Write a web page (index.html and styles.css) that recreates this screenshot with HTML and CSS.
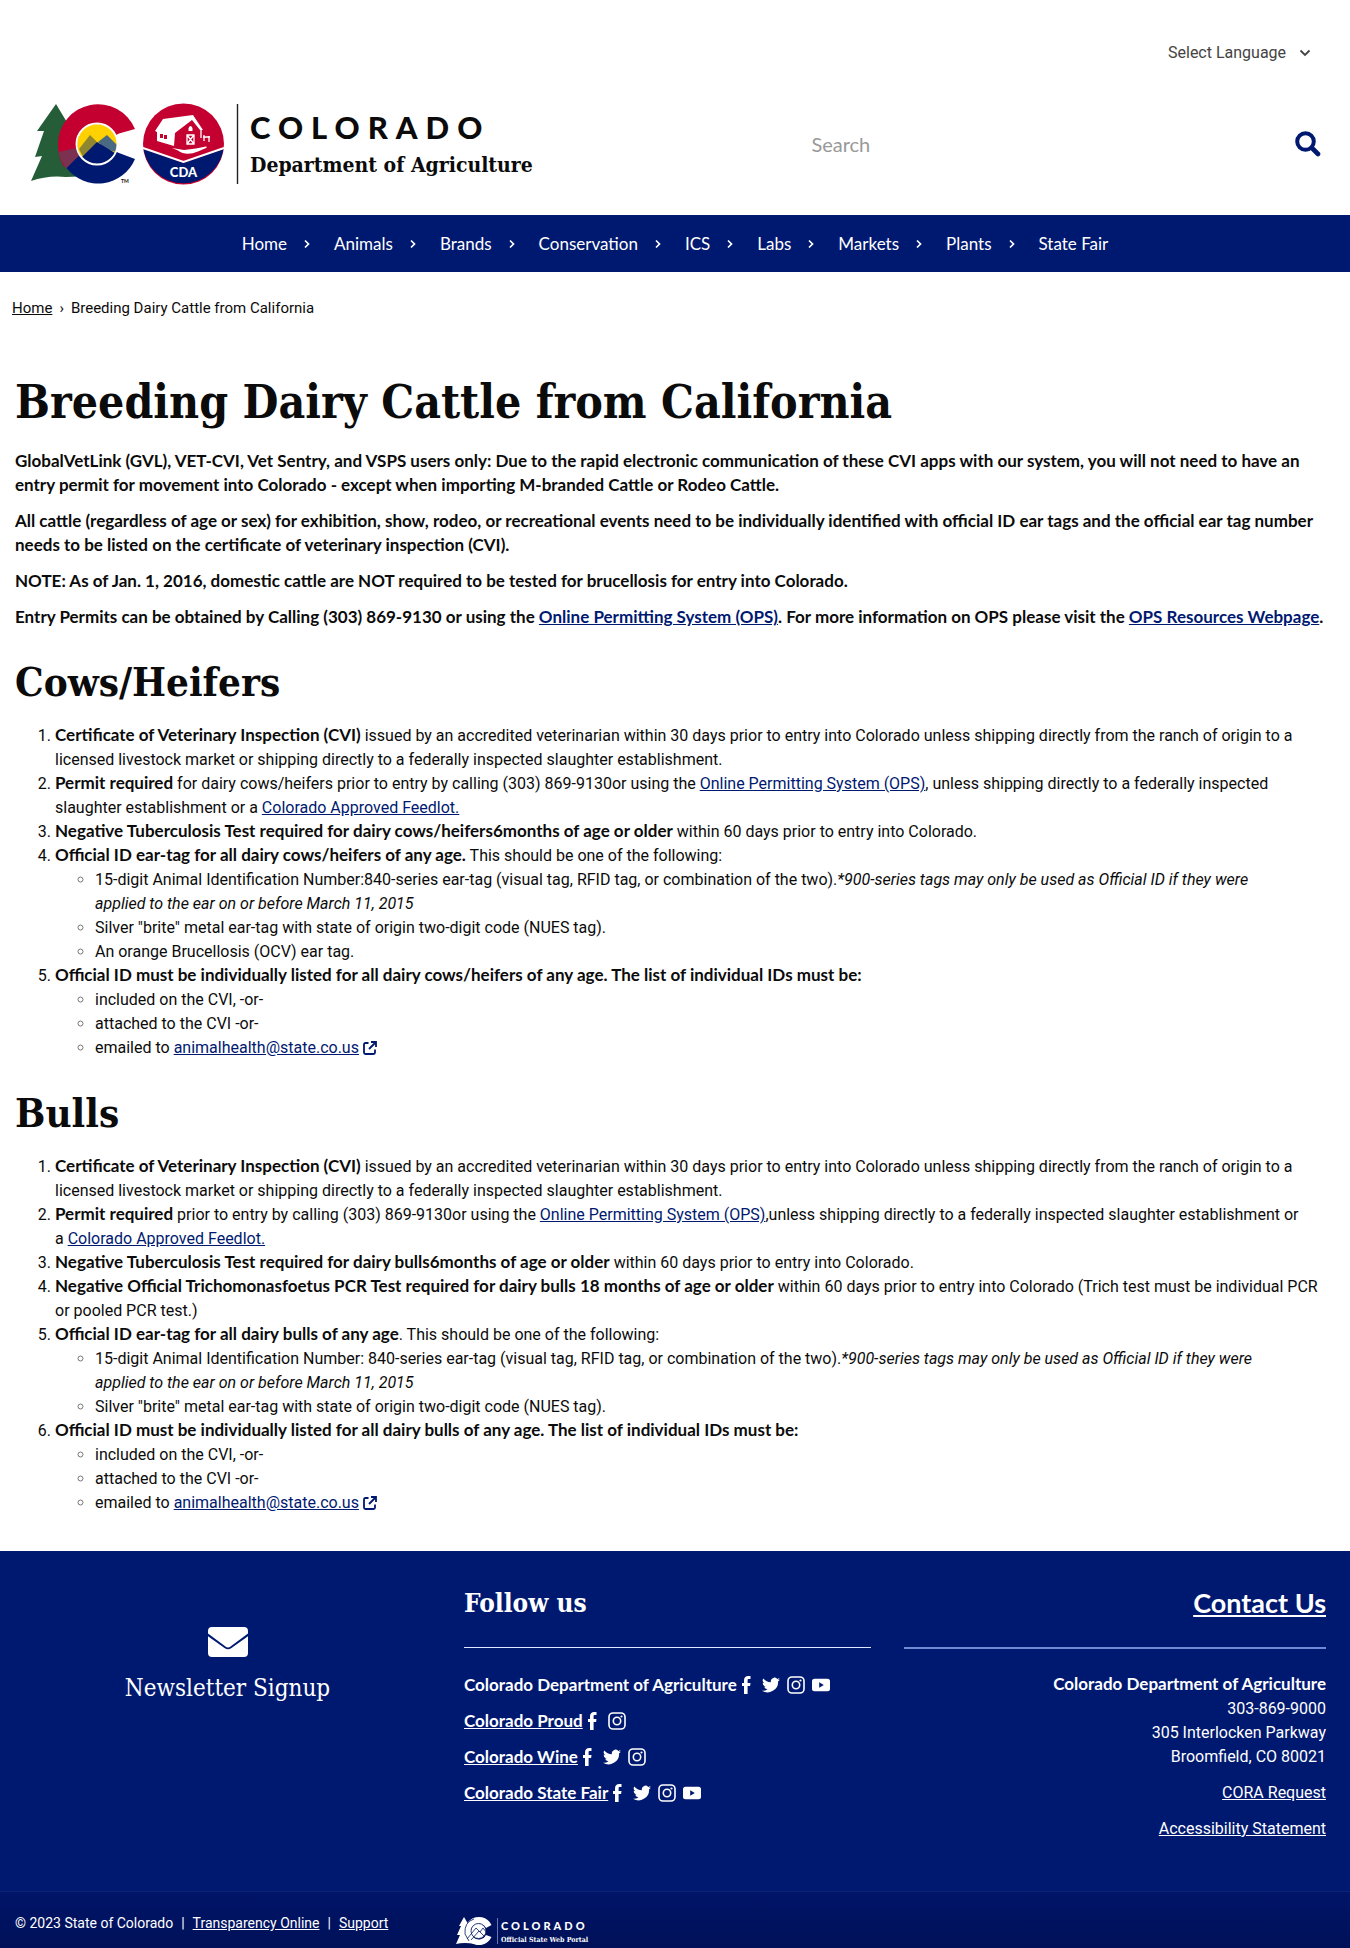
FILE: index.html
```html
<!DOCTYPE html>
<html lang="en">
<head>
<meta charset="utf-8">
<meta name="viewport" content="width=device-width, initial-scale=1">
<title>Breeding Dairy Cattle from California | Department of Agriculture</title>
<link rel="stylesheet" href="styles.css">
</head>
<body>
<svg class="sprite" aria-hidden="true">
  <symbol id="i-facebook" viewBox="0 0 18 18"><path d="M7 18V10H5V7h2V4.600C7 1.600 8.500 0 11.200 0H13.500v3h-1.600C10.800 3 10.600 3.500 10.600 4.400V7h2.900l-.4 3h-2.500v8z"/></symbol>
  <symbol id="i-twitter" viewBox="0 0 24 24"><path d="M24 4.600a10 10 0 0 1-2.800.8 5 5 0 0 0 2.200-2.700 10 10 0 0 1-3.100 1.200 4.900 4.900 0 0 0-8.400 4.500A14 14 0 0 1 1.700 3.200a4.900 4.900 0 0 0 1.500 6.500 4.900 4.900 0 0 1-2.200-.6 4.900 4.900 0 0 0 3.900 4.900 5 5 0 0 1-2.200.1 4.900 4.900 0 0 0 4.600 3.400A9.900 9.900 0 0 1 0 19.500 14 14 0 0 0 21.500 7.100 10 10 0 0 0 24 4.600z"/></symbol>
  <symbol id="i-instagram" viewBox="0 0 18 18"><rect x="1" y="1" width="16" height="16" rx="4" fill="none" stroke="currentColor" stroke-width="1.600"/><circle cx="9" cy="9" r="3.700" fill="none" stroke="currentColor" stroke-width="1.600"/><circle cx="13.500" cy="4.500" r="1.100"/></symbol>
  <symbol id="i-youtube" viewBox="0 0 18 18"><path fill-rule="evenodd" d="M2.500 2.800h13Q18 2.800 18 5.300v7.400q0 2.500-2.500 2.500h-13Q0 15.200 0 12.700V5.300Q0 2.800 2.500 2.800zM7.200 6.300v5.400L11.800 9z"/></symbol>
  <symbol id="i-external" viewBox="0 0 14 14"><path d="M5.500 2H2.500Q1 2 1 3.500v8Q1 13 2.500 13h8q1.500 0 1.500-1.500v-3M8 1h5v5M13 1 6 8" fill="none" stroke="currentColor" stroke-width="1.800"/></symbol>
  <symbol id="i-chevron" viewBox="0 0 8 10"><path d="M2 1.500 5.500 5 2 8.500" fill="none" stroke="currentColor" stroke-width="1.700"/></symbol>
</svg>

<header class="site-header">
  <div class="language">
    <select class="language-select" aria-label="Select Language"><option>Select Language</option></select>
    <svg class="language-arrow" width="12" height="8" viewBox="0 0 12 8" aria-hidden="true"><path d="M1.500 1.500 6 6l4.500-4.500" fill="none" stroke="currentColor" stroke-width="1.800"/></svg>
  </div>
  <div class="brand-row">
    <a class="brand" href="#" aria-label="Colorado Department of Agriculture home">
      <svg width="520" height="84" viewBox="28 102 520 84">
        <path fill="#245d38" d="M56 104 68 124 90 176 66 177Q48 175 31 181L42 156 35 157 44 131 37 131z"/>
        <path fill="#c3002f" d="M135 129A40 40 0 0 0 58 144q0 14 6 23L98 144 119 133.500z"/>
        <path fill="#7c3150" d="M58.500 152 Q60 161 66.500 169L80 156 76 148z"/>
        <path fill="#001970" d="M66.500 168 94 141 119 153 135 159A40 40 0 0 1 66.500 168z"/>
        <circle cx="97" cy="144" r="20" fill="#ffd100"/>
        <path fill="#8f8730" d="M79 149 90 135 96 141 102 149 84 159z"/>
        <path fill="#4a6a83" d="M98 142 107 135 117 145 116 152 106 149z"/>
        <path fill="#001970" d="M82 157 97 142 115 153A20 20 0 0 1 82 157z"/>
        <circle cx="97" cy="144" r="20.500" fill="none" stroke="#fff" stroke-width="1.800"/>
        <text x="121" y="183" class="logo-tm">TM</text>
        <circle cx="183.500" cy="144" r="40.500" fill="#c3002f"/>
        <path fill="#001970" d="M143.500 149 183.500 163 223.500 149A40.500 40.500 0 0 1 143.500 149z"/>
        <path fill="none" stroke="#fff" stroke-width="2" d="M143 148 183.500 162 224 148"/>
        <path fill="#fff" d="M163 119 193 115 203 130 200 130 192 120 175 133 174 146 157 141 157 132 155 131z"/>
        <path fill="#c3002f" d="M160 134h3v4h-3zM164 135h3v4h-3z"/>
        <path fill="none" stroke="#fff" stroke-width="1.300" d="M187 135h7v9h-7zl7 9m0-9-7 9M201 129v9m3-3v6m5-5v6m-6-5h7"/>
        <path fill="#fff" d="M188.500 128q2-4 4 0v3h-4zM172 148l12 2 12-1.500 10-2q2 0 0 1.500l-8 3.500q-12 5-20-1z"/>
        <text x="183.500" y="177" class="logo-cda">CDA</text>
        <path stroke="#222" stroke-width="1.400" d="M237.500 104v80"/>
        <text x="250" y="139" class="logo-name">COLORADO</text>
        <text x="250" y="172" class="logo-dept">Department of Agriculture</text>
      </svg>
    </a>
    <form class="search" role="search">
      <input class="search-input" type="search" placeholder="Search" aria-label="Search">
      <button class="search-button" type="button" aria-label="Search"><svg width="26" height="26" viewBox="0 0 26 26" aria-hidden="true"><circle cx="10.500" cy="10.500" r="8.300" fill="none" stroke="currentColor" stroke-width="4"/><path d="M17 17 23 23" stroke="currentColor" stroke-width="4.600" stroke-linecap="round"/></svg></button>
    </form>
  </div>
</header>

<nav class="main-nav" aria-label="Main">
  <a href="#">Home</a><svg class="chev" aria-hidden="true"><use href="#i-chevron"/></svg>
  <a href="#">Animals</a><svg class="chev" aria-hidden="true"><use href="#i-chevron"/></svg>
  <a href="#">Brands</a><svg class="chev" aria-hidden="true"><use href="#i-chevron"/></svg>
  <a href="#">Conservation</a><svg class="chev" aria-hidden="true"><use href="#i-chevron"/></svg>
  <a href="#">ICS</a><svg class="chev" aria-hidden="true"><use href="#i-chevron"/></svg>
  <a href="#">Labs</a><svg class="chev" aria-hidden="true"><use href="#i-chevron"/></svg>
  <a href="#">Markets</a><svg class="chev" aria-hidden="true"><use href="#i-chevron"/></svg>
  <a href="#">Plants</a><svg class="chev" aria-hidden="true"><use href="#i-chevron"/></svg>
  <a href="#">State Fair</a>
</nav>

<nav class="breadcrumb" aria-label="Breadcrumb"><a href="#">Home</a><span>›</span><span>Breeding Dairy Cattle from California</span></nav>

<main class="content">
  <h1>Breeding Dairy Cattle from California</h1>
  <p>GlobalVetLink (GVL), VET-CVI, Vet Sentry, and VSPS users only: Due to the rapid electronic communication of these CVI apps with our system, you will not need to have an entry permit for movement into Colorado - except when importing M-branded Cattle or Rodeo Cattle.</p>
  <p>All cattle (regardless of age or sex) for exhibition, show, rodeo, or recreational events need to be individually identified with official ID ear tags and the official ear tag number needs to be listed on the certificate of veterinary inspection (CVI).</p>
  <p>NOTE: As of Jan. 1, 2016, domestic cattle are NOT required to be tested for brucellosis for entry into Colorado.</p>
  <p>Entry Permits can be obtained by Calling (303) 869-9130 or using the <a href="#">Online Permitting System (OPS)</a>. For more information on OPS please visit the <a href="#">OPS Resources Webpage</a>.</p>

  <h2>Cows/Heifers</h2>
  <ol>
    <li><strong>Certificate of Veterinary Inspection (CVI)</strong> issued by an accredited veterinarian within 30 days prior to entry into Colorado unless shipping directly from the ranch of origin to a licensed livestock market or shipping directly to a federally inspected slaughter establishment.</li>
    <li><strong>Permit required</strong> for dairy cows/heifers prior to entry by calling (303) 869-9130or using the <a href="#">Online Permitting System (OPS)</a>, unless shipping directly to a federally inspected slaughter&nbsp;establishment or a <a href="#">Colorado Approved Feedlot.</a></li>
    <li><strong>Negative Tuberculosis Test required for dairy cows/heifers6months of age or older</strong> within 60 days prior to entry into Colorado.</li>
    <li><strong>Official ID ear-tag for all dairy cows/heifers of any age.</strong> This should be one of the following:
      <ul>
        <li>15-digit Animal Identification Number:840-series ear-tag (visual tag, RFID tag, or combination of the two).<em>*900-series tags may only be used as Official ID if they were applied&nbsp;to&nbsp;the&nbsp;ear on or before March 11, 2015</em></li>
        <li>Silver "brite" metal ear-tag with state of origin two-digit code (NUES tag).</li>
        <li>An orange Brucellosis (OCV) ear tag.</li>
      </ul>
    </li>
    <li><strong>Official ID must be individually listed for all dairy cows/heifers of any age. The list of individual IDs must be:</strong>
      <ul>
        <li>included on the CVI, -or-</li>
        <li>attached to the CVI -or-</li>
        <li>emailed to <a href="#">animalhealth@state.co.us</a> <svg class="external" aria-hidden="true"><use href="#i-external"/></svg></li>
      </ul>
    </li>
  </ol>

  <h2>Bulls</h2>
  <ol>
    <li><strong>Certificate of Veterinary Inspection (CVI)</strong> issued by an accredited veterinarian within 30 days prior to entry into Colorado unless shipping directly from the ranch of origin to a licensed livestock market or shipping directly to a federally inspected slaughter establishment.</li>
    <li><strong>Permit required</strong> prior to entry by calling (303) 869-9130or using the <a href="#">Online Permitting System (OPS)</a>,unless shipping directly to a federally inspected slaughter establishment or a&nbsp;<a href="#">Colorado Approved Feedlot.</a></li>
    <li><strong>Negative Tuberculosis Test required for dairy bulls6months of age or older</strong> within 60 days prior to entry into Colorado.</li>
    <li><strong>Negative Official Trichomonasfoetus PCR Test required for dairy bulls 18 months of age or older</strong> within 60 days prior to entry into Colorado (Trich test must be individual PCR or&nbsp;pooled PCR test.)</li>
    <li><strong>Official ID ear-tag for all dairy bulls of any age</strong>. This should be one of the following:
      <ul>
        <li>15-digit Animal Identification Number: 840-series ear-tag (visual tag, RFID tag, or combination of the two).<em>*900-series tags may only be used as Official ID if they were applied&nbsp;to&nbsp;the&nbsp;ear on or before March 11, 2015</em></li>
        <li>Silver "brite" metal ear-tag with state of origin two-digit code (NUES tag).</li>
      </ul>
    </li>
    <li><strong>Official ID must be individually listed for all dairy bulls of any age. The list of individual IDs must be:</strong>
      <ul>
        <li>included on the CVI, -or-</li>
        <li>attached to the CVI -or-</li>
        <li>emailed to <a href="#">animalhealth@state.co.us</a> <svg class="external" aria-hidden="true"><use href="#i-external"/></svg></li>
      </ul>
    </li>
  </ol>
</main>

<footer>
  <div class="footer-main">
    <a class="newsletter" href="#">
      <svg width="40" height="30" viewBox="0 0 40 30" aria-hidden="true"><path fill="currentColor" d="M4 0h32q4 0 4 4v2.500L22.500 19.500q-2.500 1.900-5 0L0 6.500V4q0-4 4-4zM0 9.200 16.500 21q3.500 2.400 7 0L40 9.200V26q0 4-4 4H4q-4 0-4-4z"/></svg>
      <span>Newsletter Signup</span>
    </a>
    <section class="follow">
      <h3>Follow us</h3>
      <hr>
      <ul class="follow-list">
        <li><span>Colorado Department of Agriculture</span><span class="social"><a href="#" aria-label="Facebook"><svg><use href="#i-facebook"/></svg></a><a href="#" aria-label="Twitter"><svg><use href="#i-twitter"/></svg></a><a href="#" aria-label="Instagram"><svg><use href="#i-instagram"/></svg></a><a href="#" aria-label="YouTube"><svg><use href="#i-youtube"/></svg></a></span></li>
        <li><a href="#">Colorado Proud</a><span class="social"><a href="#" aria-label="Facebook"><svg><use href="#i-facebook"/></svg></a><a href="#" aria-label="Instagram"><svg><use href="#i-instagram"/></svg></a></span></li>
        <li><a href="#">Colorado Wine</a><span class="social"><a href="#" aria-label="Facebook"><svg><use href="#i-facebook"/></svg></a><a href="#" aria-label="Twitter"><svg><use href="#i-twitter"/></svg></a><a href="#" aria-label="Instagram"><svg><use href="#i-instagram"/></svg></a></span></li>
        <li><a href="#">Colorado State Fair</a><span class="social"><a href="#" aria-label="Facebook"><svg><use href="#i-facebook"/></svg></a><a href="#" aria-label="Twitter"><svg><use href="#i-twitter"/></svg></a><a href="#" aria-label="Instagram"><svg><use href="#i-instagram"/></svg></a><a href="#" aria-label="YouTube"><svg><use href="#i-youtube"/></svg></a></span></li>
      </ul>
    </section>
    <section class="contact">
      <h3><a href="#">Contact Us</a></h3>
      <hr>
      <p><strong>Colorado Department of Agriculture</strong><br>303-869-9000<br>305 Interlocken Parkway<br>Broomfield, CO 80021</p>
      <p><a href="#">CORA Request</a></p>
      <p><a href="#">Accessibility Statement</a></p>
    </section>
  </div>
  <div class="footer-bottom">
    <div class="legal"><span>© 2023 State of Colorado</span><span>|</span><a href="#">Transparency Online</a><span>|</span><a href="#">Support</a></div>
    <a class="portal" href="#" aria-label="Colorado Official State Web Portal">
      <svg width="140" height="30" viewBox="454 1917 140 30">
        <path fill="#fff" d="M463 1918 470 1930 474 1945 Q463 1943 455 1945L459 1936 456 1936 460 1927 458 1927z"/>
        <path fill="#fff" d="M490.500 1926A14 14 0 1 0 490.500 1938L485 1936A8 8 0 1 1 485 1929z"/>
        <circle cx="477.500" cy="1932" r="7.500" fill="#fff"/>
        <g fill="none" stroke="#001663" stroke-width=".8"><path d="M473 1920Q463 1923 464 1935L468 1942M466 1940 475 1929 479 1933 482 1929 486 1934M470 1941 478 1932 484 1938"/><circle cx="477.500" cy="1932" r="7.500"/></g>
        <path stroke="#7f90c8" stroke-width=".8" d="M496.500 1919v26"/>
        <text x="500" y="1931" class="portal-name">COLORADO</text>
        <text x="500" y="1943" class="portal-sub">Official State Web Portal</text>
      </svg>
    </a>
  </div>
</footer>
</body>
</html>
```
FILE: styles.css
```css
* { box-sizing: border-box; }

body {
  margin: 0;
  background: #fff;
  color: #0b0b0b;
  font: 16px/24px Roboto, "Open Sans", sans-serif;
}

.sprite { position: absolute; width: 0; height: 0; }
svg { fill: currentColor; }

/* header */
.site-header { padding: 41px 28px 29px; }
.language {
  display: flex;
  align-items: center;
  justify-content: flex-end;
  gap: 12px;
  padding-right: 11px;
  color: #444;
}
.language-select {
  appearance: none;
  border: 0;
  padding: 0;
  background: none;
  color: inherit;
  font: inherit;
}
.brand-row {
  display: flex;
  align-items: center;
  margin-top: 37px;
}
.brand { flex: 0 0 60%; color: #0b0b0b; }
.brand svg { display: block; }
.logo-name { font: 900 31px Lato, sans-serif; letter-spacing: 8px; }
.logo-dept { font: bold 21px "DejaVu Serif Condensed", "DejaVu Serif", serif; }
.logo-cda { font: 900 13px Lato, sans-serif; fill: #fff; text-anchor: middle; }
.logo-tm { font: bold 5px Lato, sans-serif; }
.search { display: flex; flex: 1; align-items: center; padding-right: 1px; }
.search-input {
  flex: 1;
  min-width: 0;
  border: 0;
  outline: 0;
  padding: 8px 7px;
  background: none;
  font: 20px/24px Lato, "Open Sans", sans-serif;
}
.search-input::placeholder { color: #999; }
.search-button { border: 0; padding: 0; background: none; color: #001970; }
.search-button svg { display: block; fill: none; }

/* navigation */
.main-nav {
  display: flex;
  flex-wrap: wrap;
  align-items: center;
  justify-content: center;
  min-height: 57px;
  background: #001970;
  color: #fff;
  font-family: Lato, "Open Sans", sans-serif;
  font-size: 17px;
}
.main-nav a { color: inherit; text-decoration: none; }
.chev { width: 8px; height: 10px; margin: 0 23px 0 16px; }

.breadcrumb {
  display: flex;
  gap: 7px;
  padding: 24px 12px;
  font-size: 15px;
}
.breadcrumb a { color: inherit; }

/* article */
.content { padding: 29px 15px 36px; }
h1, h2, h3 { margin: 0; font-family: "DejaVu Serif Condensed", "DejaVu Serif", serif; font-weight: bold; }
h1 { margin-bottom: 18px; font-size: 46px; line-height: 58px; }
h2 { margin: 29px 0 18px; font-size: 40px; line-height: 48px; }
strong { font: bold 17px/20px Lato, "Open Sans", sans-serif; }
.content p { margin: 0 0 12px; font: bold 17px/24px Lato, "Open Sans", sans-serif; }
.content a, .external { color: #001970; }
ol, ul { margin: 0; padding-left: 40px; }
ul { list-style: circle; }
ul li::marker { color: #777; }
.external { width: 14px; height: 14px; vertical-align: -2px; }

/* footer */
footer { background: #001970; color: #fff; }
footer a { color: inherit; }
.footer-main {
  display: grid;
  grid-template-columns: 407fr 407fr 422fr;
  gap: 33px;
  padding: 36px 24px 38px;
}
.newsletter {
  display: flex;
  flex-direction: column;
  align-items: center;
  gap: 16px;
  padding-top: 40px;
  font: 24px/30px "DejaVu Serif Condensed", "DejaVu Serif", serif;
  text-decoration: none;
}
h3 { font-size: 26px; line-height: 32px; }
hr { height: 1px; margin: 28px 0 25px; border: 0; background: #dfe6ff; }
.follow-list { padding: 0; list-style: none; font: bold 17px/24px Lato, "Open Sans", sans-serif; }
.follow-list li { display: flex; align-items: center; margin-bottom: 12px; }
.social { display: flex; gap: 7px; }
.social svg { display: block; width: 18px; height: 18px; }
.contact { text-align: right; }
.contact h3 { font: bold 27px/32px Lato, "Open Sans", sans-serif; }
.contact hr { height: 2px; margin-bottom: 24px; background: #6f8bd6; }
.contact p { margin: 0 0 12px; }
.footer-bottom {
  display: grid;
  grid-template-columns: 1fr 2fr;
  align-items: start;
  padding: 19px 15px 2px;
  border-top: 1px solid #0c2376;
  background: linear-gradient(#001468, #001158);
  font-size: 14px;
}
.legal { display: flex; gap: 8px; }
.portal { padding: 5px 0 0; }
.portal svg { display: block; }
.portal-name { font: 900 11px Lato, sans-serif; letter-spacing: 3px; }
.portal-sub { font: bold 7px "DejaVu Serif Condensed", "DejaVu Serif", serif; }
```
